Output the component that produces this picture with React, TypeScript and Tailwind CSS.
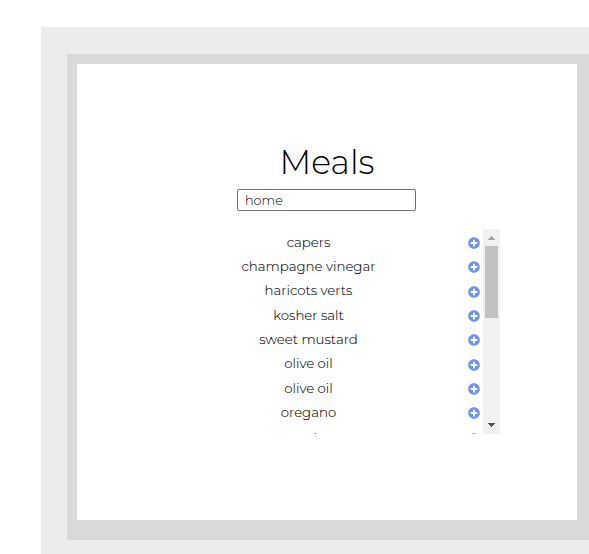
import { useState } from "react";
import { FaPlusCircle } from "react-icons/fa";

const meals = [
  "capers",
  "champagne vinegar",
  "haricots verts",
  "kosher salt",
  "sweet mustard",
  "olive oil",
  "olive oil",
  "oregano",
  "panko",
];

function Scrollbar() {
  return (
    <div className="flex h-full w-[17px] shrink-0 flex-col items-center bg-[#f1f1f1]">
      <svg className="h-[17px] w-[17px] shrink-0" viewBox="0 0 17 17" shapeRendering="crispEdges">
        <path d="M8 7h1v1h1v1h1v1h1v1H5v-1h1V9h1V8h1z" fill="#a3a3a3" />
      </svg>
      <div className="h-[72px] w-[13px] bg-[#c1c1c1]" />
      <svg className="mt-auto h-[17px] w-[17px] shrink-0" viewBox="0 0 17 17" shapeRendering="crispEdges">
        <path d="M5 6h7v1h-1v1h-1v1H9v1H8V9H7V8H6V7H5z" fill="#505050" />
      </svg>
    </div>
  );
}

export default function App() {
  const [query, setQuery] = useState("home");
  return (
    <div className="h-[554px] w-[589px] overflow-hidden bg-white pl-[41px] pt-[27px] font-[Montserrat,Inter,sans-serif] text-black">
      <div className="h-full bg-[#ececec] pl-[26px] pt-[27px]">
        <div className="h-[486px] bg-[#d9d9d9] pl-[10px] pt-[10px]">
          <main className="flex h-[456px] w-[500px] flex-col bg-white pl-[160px] pt-[74px]">
            <h1 className="w-[180px] text-center text-[33.2px] font-light leading-[48px]">Meals</h1>
            <input
              aria-label="Search meals"
              value={query}
              onChange={(e) => setQuery(e.target.value)}
              className="mt-[3px] h-[22px] w-[179px] rounded-[2px] border border-[#767676] px-[7px] text-[12.8px] font-light text-black outline-none"
            />
            <div className="mt-[18px] flex h-[205px] w-[263px] overflow-hidden">
              <ul className="min-w-0 flex-1 pt-[1.65px]">
                {meals.map((meal, i) => (
                  <li key={i} className="group flex h-[24.34px] items-start last:pt-[1px]">
                    <span className="w-[143px] whitespace-nowrap text-center text-[13.33px] font-light leading-[22px] text-black [-webkit-text-stroke:0.08px_black] group-last:mt-[1px]">
                      {meal}
                    </span>
                    <FaPlusCircle className="ml-[88px] mt-[6.4px] h-[12px] w-[12px] shrink-0 text-[#6c94ec]" />
                  </li>
                ))}
              </ul>
              <Scrollbar />
            </div>
          </main>
        </div>
      </div>
    </div>
  );
}
